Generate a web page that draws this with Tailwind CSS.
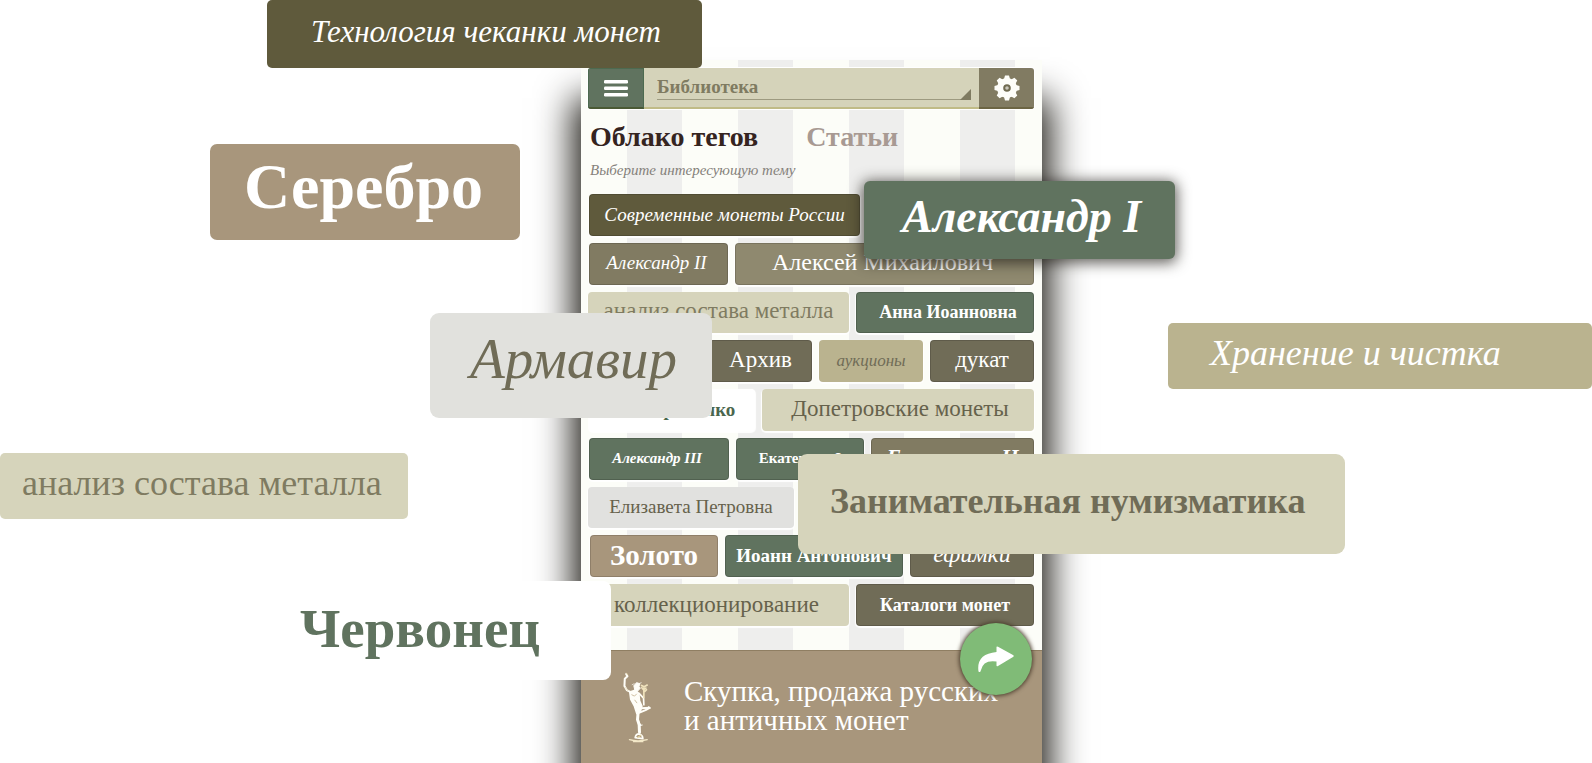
<!DOCTYPE html>
<html lang="ru">
<head>
<meta charset="utf-8">
<meta name="viewport" content="width=device-width, initial-scale=1">
<title>Библиотека</title>
<script src="https://cdn.jsdelivr.net/npm/@tailwindcss/browser@4"></script>
</head>
<body class="bg-white font-['Liberation_Serif',serif]">
<main class="relative flex min-h-screen flex-col overflow-hidden pt-[60px] pl-[31px]">

  <section class="relative mx-auto flex w-full max-w-[461px] grow flex-col bg-[repeating-linear-gradient(90deg,#fcfdf8_0px,#fcfdf8_46px,#eeeeed_46px,#eeeeed_101px,#fcfdf8_101px,#fcfdf8_111px)] pt-2 shadow-[0_46px_34px_8px_#1e1c16]">

    <header class="relative ml-[7px] mr-2 flex h-[41px] overflow-hidden rounded-[3px] ring-1 ring-white">
      <button type="button" aria-label="Меню" class="flex w-14 items-center justify-center border border-b-2 border-[#4d6a50] border-b-[#4a5a35] bg-[#60735f]">
        <svg class="h-[17px] w-6" viewBox="0 0 24 17" fill="#fff"><rect width="24" height="3.500" rx="1.200"/><rect y="6.500" width="24" height="3.500" rx="1.200"/><rect y="13" width="24" height="3.500" rx="1.200"/></svg>
      </button>
      <div class="relative grow border-b-2 border-[#c0bb87] bg-[#d5d3ba] pl-[13px] pr-2">
        <select aria-label="Раздел" class="block h-8 w-full appearance-none border-b border-[#9d9a80] bg-transparent pt-[7px] text-[19px] leading-6 font-bold text-[#7f7b61] outline-none">
          <option>Библиотека</option>
        </select>
        <svg class="absolute top-[21px] right-2 size-[11px]" viewBox="0 0 11 11"><path d="M11 0V11H0Z" fill="#7f7b61"/></svg>
      </div>
      <button type="button" aria-label="Настройки" class="flex w-[55px] items-center justify-center border-b-2 border-[#6c6544] bg-[#817b62]">
        <svg class="size-[26px]" viewBox="-13 -13 26 26">
          <g fill="#fdfdf9"><circle r="10"/>
            <g id="t"><path d="M-3-9L-2-12.500H2L3-9V9L2 12.500H-2L-3 9Z"/></g>
            <use href="#t" transform="rotate(45)"/><use href="#t" transform="rotate(90)"/><use href="#t" transform="rotate(135)"/>
          </g>
          <circle r="2.800" fill="#c9c7ba" stroke="#6f6a50" stroke-width="2"/>
        </svg>
      </button>
    </header>

    <nav class="relative mt-3 flex gap-12 pl-[9px] text-[28px] leading-8 font-bold">
      <button type="button" class="text-[#35241f]">Облако тегов</button>
      <button type="button" class="text-[#a89a93]">Статьи</button>
    </nav>
    <p class="relative mt-[7px] pl-[9px] text-[15px] leading-5 text-[#85817b] italic">Выберите интересующую тему</p>

    <div class="relative mt-3.5 ml-[7px] mr-2 grid h-[432px] grid-rows-9 gap-[7px] text-white [&_button]:rounded-[4px] [&_button]:whitespace-nowrap [&_button]:border [&_button]:border-black/15 [&_button]:shadow-[0_1px_1px_1px_#fffffff0]">
      <div class="flex gap-[7px]">
        <button type="button" class="ml-px w-[271px] bg-[#5f5a3c] text-[19px] italic">Современные монеты России</button>
      </div>
      <div class="flex gap-[7px]">
        <button type="button" class="ml-px w-[139px] bg-[#817b62] pr-1 text-[19px] italic">Александр II</button>
        <button type="button" class="grow bg-[#8f896f] pr-1 pb-1 text-[24px]">Алексей Михайлович</button>
      </div>
      <div class="flex gap-[7px]">
        <button type="button" class="w-[261px] border-none! bg-[#d6d4bb] pb-0.5 text-[23px] text-[#7f7b61]">анализ состава металла</button>
        <button type="button" class="grow bg-[#60735f] pl-1.5 text-[18px] font-bold">Анна Иоанновна</button>
      </div>
      <div class="flex justify-end gap-[7px]">
        <button type="button" class="w-[103px] bg-[#706c57] pb-0.5 text-[23px]">Архив</button>
        <button type="button" class="w-[104px] border-none! bg-[#bab38f] text-[17px] text-[#706c57] italic">аукционы</button>
        <button type="button" class="w-[104px] bg-[#706c57] pb-0.5 text-[23px]">дукат</button>
      </div>
      <div class="flex gap-[7px]">
        <button type="button" class="ml-px w-[166px] border-none! bg-white text-[19px] font-bold text-[#4a664d]">В. Петриченко</button>
        <button type="button" class="grow border-none! bg-[#d6d4bb] pb-0.5 pl-1 text-[23px] text-[#66624c]">Допетровские монеты</button>
      </div>
      <div class="flex gap-[7px]">
        <button type="button" class="ml-px w-[140px] bg-[#60735f] pr-1 pb-0.5 text-[15px] font-bold italic">Александр III</button>
        <button type="button" class="w-[128px] bg-[#60735f] pb-0.5 text-[15px] font-bold">Екатерина I</button>
        <button type="button" class="grow bg-[#817b62] pb-1 text-[22px] font-bold italic">Екатерина II</button>
      </div>
      <div class="flex gap-[7px]">
        <button type="button" class="w-[206px] border-none! bg-[#e1e1df] text-[19px] text-[#66624c]">Елизавета Петровна</button>
      </div>
      <div class="flex gap-[7px]">
        <button type="button" class="ml-0.5 w-[128px] bg-[#a8967c] pb-0.5 text-[29px] leading-8 font-bold">Золото</button>
        <button type="button" class="w-[178px] bg-[#60735f] text-[19px] font-bold">Иоанн Антонович</button>
        <button type="button" class="grow bg-[#706c57] pb-1 text-[24px] italic">ефимки</button>
      </div>
      <div class="flex gap-[7px]">
        <button type="button" class="w-[261px] border-none! bg-[#d6d4bb] pr-1 text-[23px] text-[#66624c]">коллекционирование</button>
        <button type="button" class="grow bg-[#706c57] text-[18px] font-bold">Каталоги монет</button>
      </div>
    </div>

    <footer class="relative mt-6 flex grow border-t border-[#8f7e62] bg-[#a8967c]">
      <svg class="mt-[21px] ml-10 h-[72px] w-8 shrink-0" viewBox="95 50 95 215" fill="none" stroke="#fffef8" stroke-linecap="round" stroke-linejoin="round">
        <path d="M110 56L114 63L106 70L105 92L112 104L124 110" stroke-width="6"/>
        <path d="M111 53l3 5M107 96l9 10" stroke="#e0cf9c" stroke-width="2"/>
        <path d="M133 91l9-9 9 3-3 9 4 4-7 8-9-2z" fill="#fffef8" stroke-width="3"/>
        <path d="M128 88l6-3M150 84l5-2" stroke-width="2"/>
        <path d="M121 110L139 104L148 116L150 136L157 152L153 166L142 174L135 152L124 132Z" fill="#fffef8" stroke-width="5"/>
        <path d="M127 118l8 4 6-6M136 134l6 8" stroke="#b8a27a" stroke-width="2"/>
        <path d="M148 113L162 128L163 148" stroke-width="5"/>
        <path d="M163 126V98M157 97l5 6 7-5M156 90l8 4 9-5M166 108l5-5" stroke="#f0e3bd" stroke-width="5"/>
        <path d="M155 158L180 157L168 164L148 172" stroke-width="6"/>
        <path d="M177 153l5 5" stroke-width="3"/>
        <path d="M146 168L144 192L149 208L150 230" stroke-width="9"/>
        <path d="M152 210l6-2M147 196l6 12" stroke-width="3"/>
        <path d="M137 246Q139 235 149 235Q160 238 160 249Z" stroke-width="5"/>
        <path d="M145 245l9-6" stroke="#e0cf9c" stroke-width="4"/>
        <path d="M120 252Q145 259 173 252M132 258H160" stroke="#f3e8c8" stroke-width="4"/>
      </svg>
      <p class="ml-[31px] pt-[26px] text-[29px] leading-[29px] whitespace-nowrap text-white">Скупка, продажа русских<br>и античных монет</p>
      <button type="button" aria-label="Поделиться" class="absolute -top-7 right-[10px] flex size-[72px] items-center justify-center rounded-full bg-[#80bb77] shadow-[0_0_4px_1px_#4a3c2c]">
        <svg class="h-[27px] w-9" viewBox="0 0 36 27"><path d="M18.500 1Q18.500 0 20 .7L35 9Q36.500 10 35 11L20 20Q18.500 20.700 18.500 19.500V15.500Q5 13.500 2.800 24.500Q2.300 27 .5 25.500Q-2 8 18.500 6Z" fill="#fff"/></svg>
      </button>
    </footer>
  </section>

  <!-- Floating tag cards scattered over the scene -->
  <a href="#" class="absolute top-0 left-[calc(50%-529px)] flex h-[68px] w-[435px] items-center rounded-[5px] bg-[#5f5a3c] pb-1 pl-11 text-[31px] whitespace-nowrap text-white italic">Технология чеканки монет</a>
  <a href="#" class="absolute top-36 left-[calc(50%-586px)] flex h-24 w-[310px] items-center rounded-[7px] bg-[#a8967c] pb-2.5 pl-[34px] text-[64px] font-bold text-white">Серебро</a>
  <a href="#" class="absolute top-[181px] left-[calc(50%+68px)] flex h-[78px] w-[311px] items-center rounded-[6px] bg-[#60735f] pb-2 pl-[38px] text-[46px] font-bold whitespace-nowrap text-white italic shadow-[0_2px_14px_2px_#1e1c16b0]">Александр I</a>
  <a href="#" class="absolute top-[313px] left-[calc(50%-366px)] flex h-[105px] w-[282px] items-center rounded-[9px] bg-[#e1e1dd] pb-[13px] pl-10 text-[57px] text-[#706c57] italic">Армавир</a>
  <a href="#" class="absolute top-[323px] right-0 left-[calc(50%+372px)] flex h-[66px] items-center rounded-[5px] bg-[#bab38f] pb-1.5 pl-[42px] text-[36px] whitespace-nowrap text-white italic">Хранение и чистка</a>
  <a href="#" class="absolute top-[453px] left-0 flex h-[66px] w-[408px] items-center rounded-[5px] bg-[#d6d4bb] pb-1.5 pl-[22px] text-[36px] whitespace-nowrap text-[#7f7b61]">анализ состава металла</a>
  <a href="#" class="absolute top-[454px] left-[calc(50%+2px)] flex h-[100px] w-[547px] items-center rounded-[9px] bg-[#d6d4bb] pb-1.5 pl-8 text-[36px] font-bold whitespace-nowrap text-[#706c57]">Занимательная нумизматика</a>
  <a href="#" class="absolute top-[581px] left-[calc(50%-536px)] flex h-[99px] w-[351px] items-center rounded-[8px] bg-white pb-0.5 pl-10 text-[55px] font-bold text-[#60735f]">Червонец</a>
</main>
</body>
</html>
